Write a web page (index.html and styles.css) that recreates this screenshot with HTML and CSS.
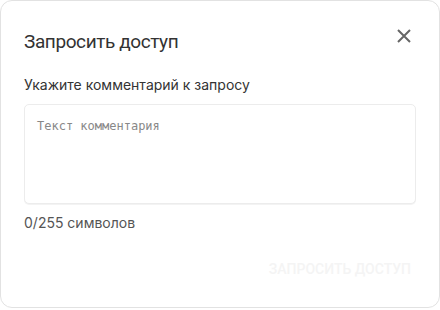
FILE: index.html
```html
<!DOCTYPE html>
<html lang="ru">
<head>
    <meta charset="UTF-8">
    <title>Запросить доступ</title>
    <link rel="stylesheet" href="styles.css">
</head>
<body>
    <div class="dialog">
        <div class="dialog-header">
            <h2>Запросить доступ</h2>
            <button class="close-button" aria-label="Закрыть">
                <svg width="14" height="14" viewBox="0 0 14 14">
                    <path d="M1 1 L13 13 M13 1 L1 13" stroke="#666" stroke-width="2" fill="none"/>
                </svg>
            </button>
        </div>

        <label for="comment" class="comment-label">Укажите комментарий к запросу</label>
        <textarea id="comment" placeholder="Текст комментария"></textarea>
        <div class="counter">0/255 символов</div>

        <div class="dialog-actions">
            <button class="submit-button" disabled>Запросить доступ</button>
        </div>
    </div>
</body>
</html>
```

FILE: styles.css
```css
body {
    margin: 0;
    font-family: Inter, "Noto Sans", sans-serif;
    background-color: #ffffff;
}

.dialog {
    width: 440px;
    height: 308px;
    box-sizing: border-box;
    border: 1px solid #e2e2e2;
    border-radius: 12px;
    padding: 22px 23px 0 23px;
    display: flex;
    flex-direction: column;
}

.dialog-header {
    display: flex;
    justify-content: space-between;
    align-items: center;
    height: 36px;
}

h2 {
    margin: 0;
    font-family: Roboto, sans-serif;
    font-size: 19px;
    font-weight: 400;
    letter-spacing: -0.4px;
    color: #333333;
}

.close-button {
    background: none;
    border: none;
    padding: 0;
    margin-right: 5px;
    margin-bottom: 10px;
    width: 14px;
    height: 14px;
    cursor: pointer;
    display: flex;
}

.comment-label {
    margin-top: 17px;
    font-size: 14px;
    color: #333333;
    line-height: 18px;
}

textarea {
    margin-top: 10px;
    height: 100px;
    box-sizing: border-box;
    border: 1px solid #ececec;
    border-radius: 5px;
    box-shadow: 0 1px 0 #f3f3f3;
    padding: 14px 12px;
    font-family: "DejaVu Sans Mono", monospace;
    font-size: 12px;
    resize: none;
    outline: none;
}

textarea::placeholder {
    color: #888888;
}

.counter {
    margin-top: 10px;
    font-size: 14px;
    color: #555555;
    line-height: 18px;
}

.dialog-actions {
    display: flex;
    justify-content: flex-end;
    margin-top: 29px;
}

.submit-button {
    background: none;
    border: none;
    padding: 0 5px 0 0;
    font-family: Roboto, sans-serif;
    font-size: 14px;
    font-weight: 500;
    text-transform: uppercase;
    color: #f4f4f4;
}
```
